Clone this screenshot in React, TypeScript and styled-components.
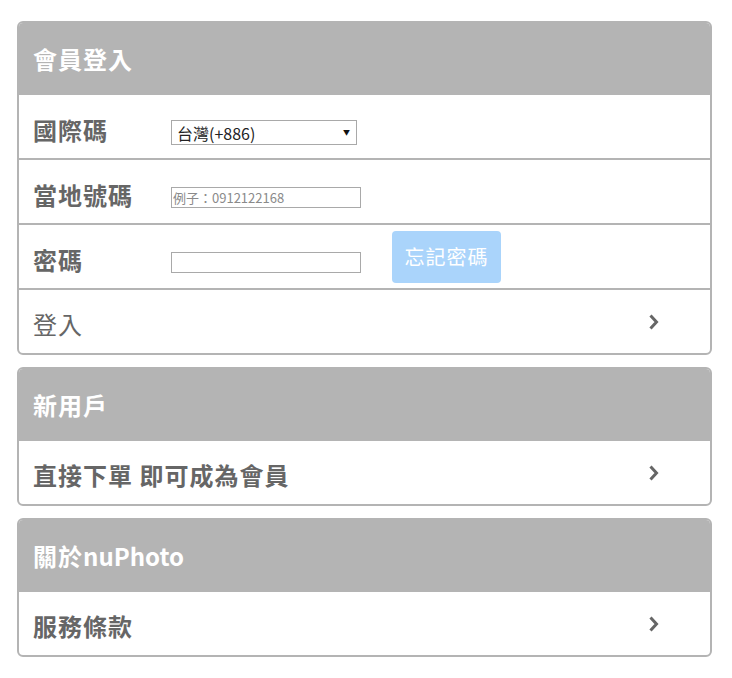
import React from 'react';
import styled, { createGlobalStyle } from 'styled-components';

const GlobalStyle = createGlobalStyle`
    body {
        margin: 0;
        background: #fff;
        font-family: 'Noto Sans CJK TC', 'Noto Sans', sans-serif;
    }
`;

const Page = styled.div`
    padding: 21px 20px 20px 17px;
    display: flex;
    flex-direction: column;
    gap: 12px;
`;

const Panel = styled.section`
    border: 2px solid #b4b4b4;
    border-radius: 6px;
    overflow: hidden;
    background: #fff;
`;

const PanelHeader = styled.div`
    height: 70px;
    background: #b4b4b4;
    color: #fff;
    font-size: 24px;
    font-weight: 700;
    letter-spacing: 1px;
    display: flex;
    align-items: center;
    padding-left: 14px;
`;

const Latin = styled.span`
    letter-spacing: 0;
`;

const Row = styled.div<{ $bold?: boolean }>`
    height: 63px;
    border-top: 2px solid #b4b4b4;
    display: flex;
    align-items: center;
    padding: 0 50px 0 14px;
    color: #666;
    font-size: 24px;
    letter-spacing: 1px;
    font-weight: ${(p) => (p.$bold ? 700 : 400)};
`;

const Label = styled.div`
    width: 138px;
    flex-shrink: 0;
    margin-top: 6px;
`;

const LinkText = styled.div`
    flex: 1;
    margin-top: 4px;
`;

const SelectBox = styled.div`
    position: relative;
    width: 186px;
    height: 25px;
    margin-top: 12px;
`;

const Select = styled.select`
    display: block;
    appearance: none;
    box-sizing: border-box;
    width: 100%;
    height: 25px;
    border: 1px solid #a9a9a9;
    border-radius: 0;
    background: #fff;
    color: #222;
    font-family: 'Noto Sans CJK TC', 'Liberation Sans', sans-serif;
    font-size: 16px;
    letter-spacing: 0;
    padding: 0 0 0 5px;
    margin: 0;
`;

const SelectArrow = styled.span`
    position: absolute;
    right: 6px;
    top: 8px;
    font-size: 7px;
    line-height: 8px;
    color: #111;
    pointer-events: none;
`;

const TextInput = styled.input`
    display: block;
    width: 190px;
    height: 21px;
    box-sizing: border-box;
    border: 1px solid #a9a9a9;
    padding: 0 1px;
    margin: 11px 0 0;
    font-family: 'Noto Sans CJK TC', 'Liberation Sans', sans-serif;
    font-size: 13px;
    letter-spacing: 0;
    color: #333;

    &::placeholder {
        color: #8a8a8a;
    }
`;

const ForgotButton = styled.button`
    margin-left: 31px;
    width: 109px;
    height: 52px;
    border: none;
    border-radius: 4px;
    background: #aad4fb;
    color: #fff;
    font-family: 'Noto Sans CJK TC', sans-serif;
    font-size: 20px;
    letter-spacing: 1px;
    padding: 0;
`;

const Chevron = () => (
    <svg width="12" height="18" viewBox="0 0 12 18">
        <path d="M2.5 2.5 L8.5 9 L2.5 15.5" fill="none" stroke="#666" strokeWidth="3" />
    </svg>
);

const App: React.FC = () => {
    return (
        <>
            <GlobalStyle />
            <Page>
                <Panel>
                    <PanelHeader>會員登入</PanelHeader>
                    <Row $bold>
                        <Label>國際碼</Label>
                        <SelectBox>
                            <Select defaultValue="886">
                                <option value="886">台灣(+886)</option>
                            </Select>
                            <SelectArrow>▼</SelectArrow>
                        </SelectBox>
                    </Row>
                    <Row $bold>
                        <Label>當地號碼</Label>
                        <TextInput type="text" placeholder="例子：0912122168" />
                    </Row>
                    <Row $bold>
                        <Label>密碼</Label>
                        <TextInput type="password" />
                        <ForgotButton>忘記密碼</ForgotButton>
                    </Row>
                    <Row>
                        <LinkText>登入</LinkText>
                        <Chevron />
                    </Row>
                </Panel>
                <Panel>
                    <PanelHeader>新用戶</PanelHeader>
                    <Row $bold>
                        <LinkText>直接下單 即可成為會員</LinkText>
                        <Chevron />
                    </Row>
                </Panel>
                <Panel>
                    <PanelHeader>
                        關於<Latin>nuPhoto</Latin>
                    </PanelHeader>
                    <Row $bold>
                        <LinkText>服務條款</LinkText>
                        <Chevron />
                    </Row>
                </Panel>
            </Page>
        </>
    );
};

export default App;
